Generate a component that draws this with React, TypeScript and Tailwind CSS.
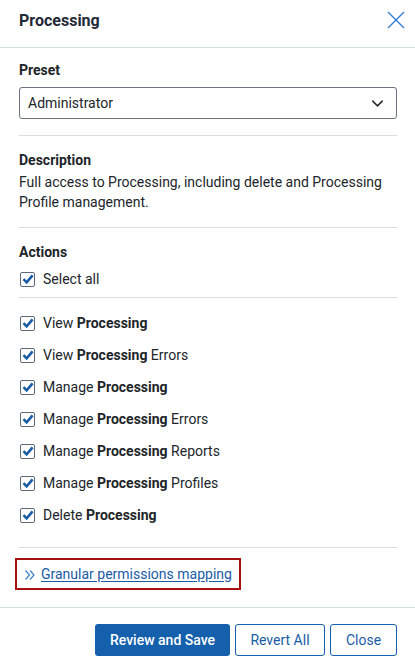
import { ChevronDown } from 'lucide-react'

const ACTIONS = [
  { pre: 'View', post: '' },
  { pre: 'View', post: 'Errors' },
  { pre: 'Manage', post: '' },
  { pre: 'Manage', post: 'Errors' },
  { pre: 'Manage', post: 'Reports' },
  { pre: 'Manage', post: 'Profiles' },
  { pre: 'Delete', post: '' },
]

function Check() {
  return (
    <span className="flex items-center justify-center w-[15px] h-[15px] border border-[#5f6b7a] rounded-[2px] bg-white shrink-0 ml-px">
      <svg viewBox="0 0 12 12" className="w-[12px] h-[12px]">
        <path d="M1.5 6.2 L4.6 9.3 L10.6 2.4" fill="none" stroke="#1a5ba6" strokeWidth="2.6" strokeLinejoin="miter" />
      </svg>
    </span>
  )
}

function Divider() {
  return <div className="h-px bg-[#d9dde3]" />
}

export default function App() {
  return (
    <div
      className="w-[415px] h-[668px] bg-white flex flex-col text-[#212529]"
      style={{ fontFamily: 'Roboto, "Liberation Sans", sans-serif' }}
    >
      {/* header */}
      <div className="h-[48px] flex items-start justify-between pl-[19px] pr-[10px] pt-[9px] border-b border-[#d5dbe3]">
        <h1 className="text-[16px] leading-6 font-bold text-[#1f2937]">Processing</h1>
        <svg viewBox="0 0 18 18" className="w-[18px] h-[18px] mt-[2px]">
          <path d="M1 1 L17 17 M17 1 L1 17" stroke="#2b7bd0" strokeWidth="1.3" fill="none" />
        </svg>
      </div>

      {/* body */}
      <div className="flex-1 flex flex-col pl-[19px] pr-[18px]">
        <div className="pt-[12px] text-[14px] leading-5 font-bold">Preset</div>
        <div className="mt-[7px] h-[32px] border border-[#6b7280] rounded-[3px] flex items-center justify-between pl-[8px] pr-[9px]">
          <span className="text-[14px]">Administrator</span>
          <ChevronDown size={19} strokeWidth={1.8} className="text-[#212529]" />
        </div>
        <div className="mt-[16px]">
          <Divider />
        </div>

        <div className="pt-[14px] text-[14px] leading-5 font-bold">Description</div>
        <p className="mt-[2px] text-[14px] leading-5">
          Full access to Processing, including delete and Processing Profile management.
        </p>
        <div className="mt-[15px]">
          <Divider />
        </div>

        <div className="pt-[14px] text-[14px] leading-5 font-bold">Actions</div>
        <label className="mt-[7px] flex items-center gap-[8px] h-5 text-[14px]">
          <Check />
          <span>Select all</span>
        </label>
        <div className="mt-[8px]">
          <Divider />
        </div>

        <div className="pt-[15px] flex flex-col gap-[12px]">
          {ACTIONS.map(({ pre, post }, index: number) => (
            <label key={index} className="flex items-center gap-[8px] h-5 text-[14px]">
              <Check />
              <span>
                {pre} <b className="font-bold">Processing</b>
                {post ? ` ${post}` : ''}
              </span>
            </label>
          ))}
        </div>
        <div className="mt-[22px]">
          <Divider />
        </div>

        <div className="pt-[10px]">
          <div className="inline-flex items-center gap-[5px] h-[32px] border-2 border-[#a80f0f] pl-[7px] pr-[7px] -ml-[4px] text-[#1a5ba6]">
            <svg viewBox="0 0 12 12" className="w-[12px] h-[12px] mt-px">
              <path d="M1.5 1.5 L5.5 6 L1.5 10.5 M6 1.5 L10 6 L6 10.5" fill="none" stroke="#3d7fc9" strokeWidth="1.2" />
            </svg>
            <span className="text-[14px] underline underline-offset-2">Granular permissions mapping</span>
          </div>
        </div>
      </div>

      {/* footer */}
      <div className="border-t border-[#d5dbe3] pt-[16px] pb-[12px] pr-[18px] flex justify-end gap-[5px]">
        <button className="h-[32px] w-[135px] rounded-[3px] bg-[#1560ad] text-white text-[14px] font-medium">
          Review and Save
        </button>
        <button className="h-[32px] w-[90px] rounded-[3px] border border-[#1560ad] text-[#1a5ba6] text-[14px]">
          Revert All
        </button>
        <button className="h-[32px] w-[67px] rounded-[3px] border border-[#1560ad] text-[#1a5ba6] text-[14px]">
          Close
        </button>
      </div>
    </div>
  )
}
